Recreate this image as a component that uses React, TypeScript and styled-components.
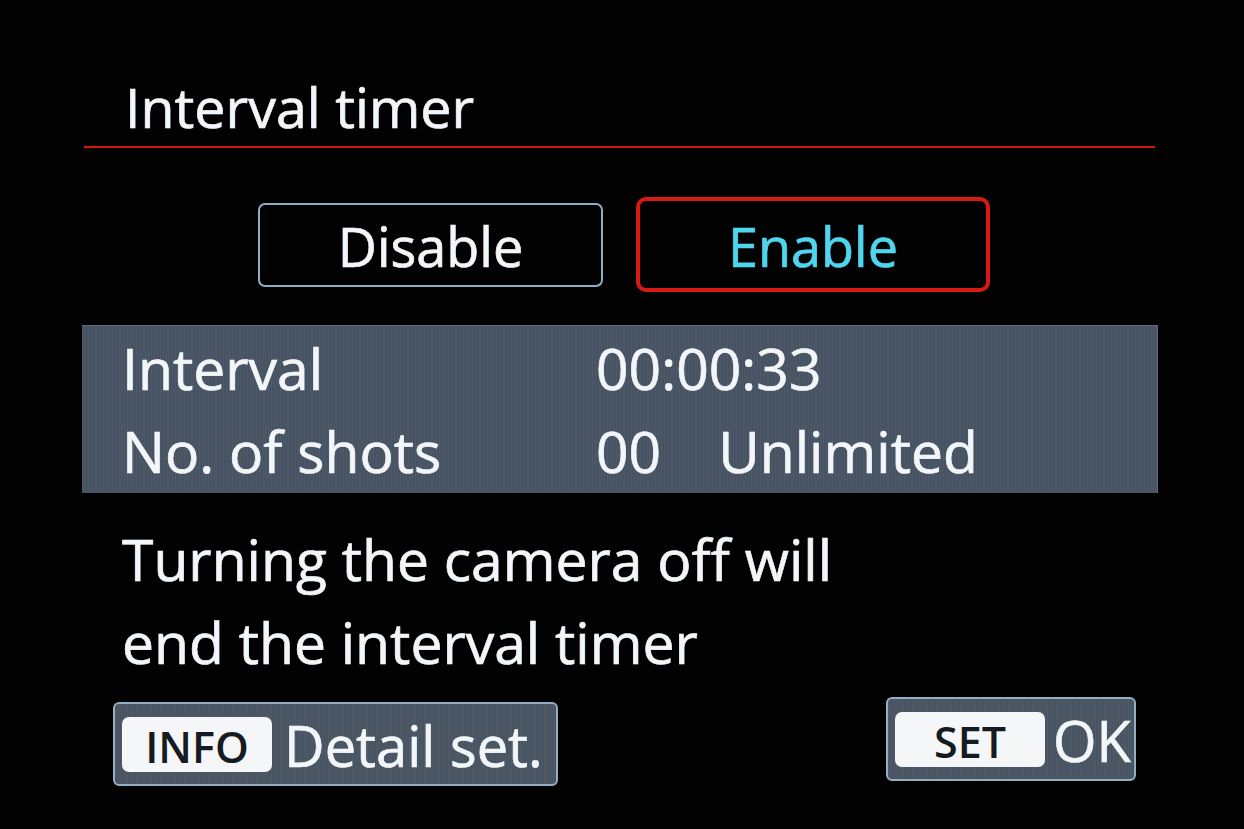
import React from "react";
import styled, { createGlobalStyle } from "styled-components";

const GlobalStyle = createGlobalStyle`
  html, body { margin: 0; padding: 0; background: #000; }
  body {
    font-family: "Open Sans", "Noto Sans", sans-serif;
    color: #f3f6f8;
    -webkit-text-stroke: 0.7px currentColor;
  }
`;

const Screen = styled.div`
  width: 1244px;
  height: 829px;
  background: #020202;
  display: flex;
  flex-direction: column;
  overflow: hidden;
  box-sizing: border-box;
  padding-top: 77px;
`;

const Header = styled.div`
  margin-left: 84px;
  width: 1071px;
  border-bottom: 2px solid #d8160f;
  padding: 0 0 9px 41px;
  box-sizing: border-box;
`;

const Title = styled.h1`
  margin: 0;
  font-size: 55.5px;
  font-weight: 400;
  line-height: 60px;
  color: #f3f6f8;
`;

const ChoiceRow = styled.div`
  display: flex;
  align-items: center;
  gap: 33px;
  margin: 49px 0 0 258px;
`;

const Choice = styled.div<{ $selected?: boolean }>`
  box-sizing: border-box;
  display: flex;
  align-items: center;
  justify-content: center;
  width: ${(p) => (p.$selected ? 354 : 345)}px;
  height: ${(p) => (p.$selected ? 95 : 84)}px;
  border: ${(p) => (p.$selected ? "4px solid #d71b12" : "2px solid #8eaec6")};
  border-radius: ${(p) => (p.$selected ? 10 : 7)}px;
  padding-top: 3px;
  font-size: 54px;
  line-height: 60px;
  color: ${(p) => (p.$selected ? "#4fd6ee" : "#f3f6f8")};
`;

const Panel = styled.div`
  margin: 33px 0 0 82px;
  width: 1076px;
  height: 168px;
  box-sizing: border-box;
  padding: 1px 0 0 40px;
  background-color: #4a5666;
  background-image: repeating-linear-gradient(
    90deg,
    rgba(255, 255, 255, 0.025) 0px,
    rgba(255, 255, 255, 0.025) 1px,
    rgba(0, 0, 0, 0.04) 1px,
    rgba(0, 0, 0, 0.04) 3px
  );
  border-top: 1px solid #5f6b7b;
  border-right: 1px solid #5f6b7b;
  display: grid;
  grid-template-columns: 474px auto;
  grid-auto-rows: 83px;
  align-items: start;
`;

const Cell = styled.div`
  font-size: 57px;
  line-height: 83px;
  color: #f3f6f8;
  white-space: nowrap;
  display: flex;
`;

const Extra = styled.span`
  margin-left: 57px;
`;

const Message = styled.p`
  margin: 25px 0 0 122px;
  font-size: 57px;
  line-height: 83px;
  color: #f3f6f8;
  white-space: nowrap;
`;

const Footer = styled.div`
  display: flex;
  justify-content: space-between;
  align-items: flex-start;
  margin-top: 13px;
  padding: 0 108px 0 113px;
`;

const KeyHint = styled.div<{ $drop: number; $width: number }>`
  box-sizing: border-box;
  width: ${(p) => p.$width}px;
  height: 84px;
  margin-top: ${(p) => p.$drop}px;
  border: 2px solid #93afc4;
  border-radius: 6px;
  background-color: #4b5766;
  background-image: repeating-linear-gradient(
    90deg,
    rgba(255, 255, 255, 0.025) 0px,
    rgba(255, 255, 255, 0.025) 1px,
    rgba(0, 0, 0, 0.04) 1px,
    rgba(0, 0, 0, 0.04) 3px
  );
  display: flex;
  align-items: center;
  gap: ${(p) => (p.$width > 300 ? 12 : 8)}px;
  padding: 0 0 0 7px;
`;

const KeyCap = styled.div`
  box-sizing: border-box;
  width: 150px;
  height: 55px;
  border-radius: 7px;
  background: #f4f6f8;
  color: #161b21;
  font-size: 43px;
  font-weight: 600;
  line-height: 55px;
  text-align: center;
  padding-top: 2px;
  -webkit-text-stroke: 0;
`;

const KeyLabel = styled.span`
  font-size: 56px;
  line-height: 60px;
  color: #f3f6f8;
  white-space: nowrap;
  padding-top: 2px;
`;

export default function App() {
  return (
    <>
      <GlobalStyle />
      <Screen>
        <Header>
          <Title>Interval timer</Title>
        </Header>
        <ChoiceRow>
          <Choice>Disable</Choice>
          <Choice $selected>Enable</Choice>
        </ChoiceRow>
        <Panel>
          <Cell>Interval</Cell>
          <Cell>00:00:33</Cell>
          <Cell>No. of shots</Cell>
          <Cell>
            00<Extra>Unlimited</Extra>
          </Cell>
        </Panel>
        <Message>
          Turning the camera off will
          <br />
          end the interval timer
        </Message>
        <Footer>
          <KeyHint $drop={5} $width={445}>
            <KeyCap>INFO</KeyCap>
            <KeyLabel>Detail set.</KeyLabel>
          </KeyHint>
          <KeyHint $drop={0} $width={250}>
            <KeyCap>SET</KeyCap>
            <KeyLabel>OK</KeyLabel>
          </KeyHint>
        </Footer>
      </Screen>
    </>
  );
}
